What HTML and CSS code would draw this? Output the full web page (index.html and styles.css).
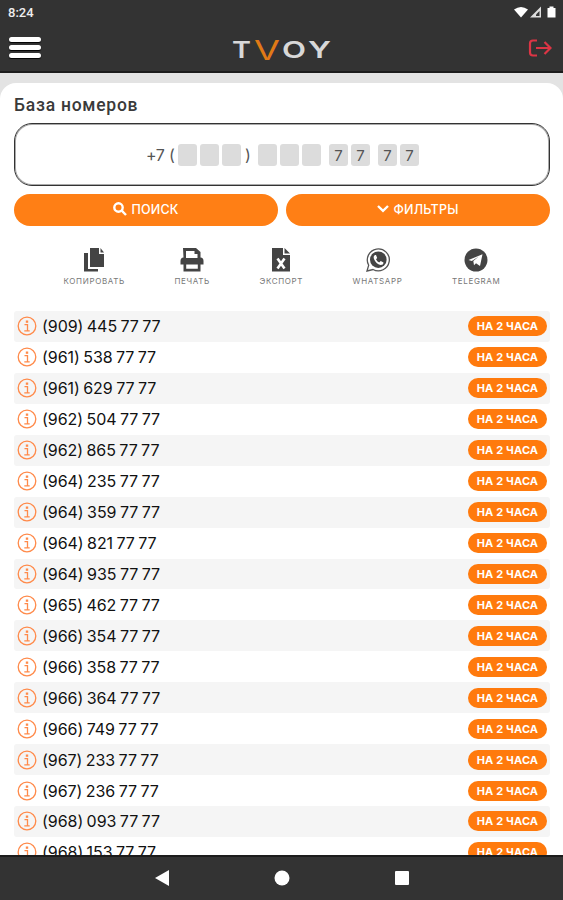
FILE: index.html
```
<!DOCTYPE html>
<html lang="ru">

<head>
    <meta charset="utf-8">
    <meta name="viewport" content="width=device-width, initial-scale=1.0">
    <title>TVOY</title>
    <link rel="stylesheet" href="styles.css">
</head>

<body>
    <header>
        <div class="status">
            <span>8:24</span>
            <svg width="46" height="16" viewBox="0 0 46 16">
                <path fill="#fff" d="M1 6.500Q8 1.500 15 6.500L8 14.500z" />
                <path fill="#ddd" d="M17 14.500 28 3.500v11z" />
                <path fill="#333" d="M23 11.500 26.500 8v5h-3.500z" />
                <path fill="#fff" d="M34.500 5h2V3.500h4V5h2v9.500h-8z" />
            </svg>
        </div>
        <div class="topbar">
            <button class="burger"><i></i><i></i><i></i></button>
            <svg class="logo" width="104" height="44" viewBox="0 0 104 44">
                <text x="3" y="31.500" textLength="19" lengthAdjust="spacingAndGlyphs">T</text>
                <text class="logo-v" x="25" y="33.500" textLength="26" lengthAdjust="spacingAndGlyphs">V</text>
                <text x="53" y="31.500" textLength="24" lengthAdjust="spacingAndGlyphs">O</text>
                <text x="79" y="31.500" textLength="23" lengthAdjust="spacingAndGlyphs">Y</text>
            </svg>
            <svg class="exit" width="24" height="18" viewBox="0 0 24 18">
                <path d="M9 1.500H5Q2 1.500 2 4.500v9Q2 16.500 5 16.500h4M8 9h14M16.500 3l6 6-6 6" />
            </svg>
        </div>
    </header>

    <main>
        <h1>База номеров</h1>

        <section class="mask">
            <span class="code">+7</span>
            <span class="bracket">(</span>
            <div class="group"><b></b><b></b><b></b></div>
            <span class="bracket close">)</span>
            <div class="group"><b></b><b></b><b></b></div>
            <div class="group"><b>7</b><b>7</b></div>
            <div class="group"><b>7</b><b>7</b></div>
        </section>

        <section class="buttons">
            <button class="btn">
                <svg width="14" height="14" viewBox="0 0 14 14">
                    <circle cx="5.500" cy="5.500" r="4.200" />
                    <path d="M8.700 8.700 13 13" />
                </svg>
                ПОИСК
            </button>
            <button class="btn">
                <svg width="12" height="14" viewBox="0 0 12 14">
                    <path d="M1 4l5 4.800L11 4" />
                </svg>
                ФИЛЬТРЫ
            </button>
        </section>

        <section class="tools">
            <a class="tool">
                <svg width="24" height="24" viewBox="0 0 24 24">
                    <path d="M8 0h9v6h5v13H8z" />
                    <path d="M18.500 0 22 4.500h-3.500z" />
                    <path d="M2 5h4v16h10v2.500H2z" />
                </svg>
                КОПИРОВАТЬ
            </a>
            <a class="tool">
                <svg width="24" height="24" viewBox="0 0 24 24">
                    <path fill-rule="evenodd" d="M3 0h13l4.500 4v5.500q3 0 3 3.500v3.500h-3v7H3.500v-7h-3V13q0-3.500 3-3.500zM6 3v7h11.500V6H14.500V3zM6.200 16.500v4.300h11.600v-4.300z" />
                </svg>
                ПЕЧАТЬ
            </a>
            <a class="tool">
                <svg width="24" height="24" viewBox="0 0 24 24">
                    <path d="M3 0h11v7h7v16.500H3z" />
                    <path d="M15.500 0 21 5.500h-5.500z" />
                    <path class="line" d="M8.500 10.500l7 10M15.500 10.500l-7 10" />
                </svg>
                ЭКСПОРТ
            </a>
            <a class="tool">
                <svg width="24" height="24" viewBox="0 0 24 24">
                    <path class="ring" d="M1 23l1.700-5.800A11 11 0 1 1 7 21.500z" />
                    <circle cx="12.300" cy="11.700" r="8.300" />
                    <path class="phone" d="M9 7q-2 1-1 4 2 5 6.500 6 3 0 3-2.500L14.700 13l-1.500 1.500Q11 13.500 10 11.200l1.200-1.300L10 7z" />
                </svg>
                WHATSAPP
            </a>
            <a class="tool">
                <svg width="24" height="24" viewBox="0 0 24 24">
                    <circle cx="12" cy="12" r="11.500" />
                    <path class="plane" d="M4.500 12 18.500 6.200 16 18l-4-2.800-2 2-.7-4.200 5.500-4.500-7 4.500z" />
                </svg>
                TELEGRAM
            </a>
        </section>

        <section class="numbers"></section>
    </main>

    <template class="number-template">
        <article class="row">
            <svg class="info" width="20" height="20" viewBox="0 0 20 20">
                <circle cx="10" cy="10" r="8.800" />
                <path class="dot" d="M8.800 4.500h2.400v2.300H8.800z" />
                <path d="M7.500 8.700h3v6M7.300 14.800h5.400" />
            </svg>
            <span class="phone-number"></span>
            <span class="badge">НА 2 ЧАСА</span>
        </article>
    </template>

    <footer>
        <svg width="16" height="18" viewBox="0 0 16 18"><path d="M1 9 15 1v16z" /></svg>
        <svg width="16" height="16" viewBox="0 0 16 16"><circle cx="8" cy="8" r="7.500" /></svg>
        <svg width="16" height="16" viewBox="0 0 16 16"><rect x="1" y="1" width="14" height="14" rx="1" /></svg>
    </footer>

    <script>
        const numbers = [
            "(909) 445", "(961) 538", "(961) 629", "(962) 504", "(962) 865", "(964) 235",
            "(964) 359", "(964) 821", "(964) 935", "(965) 462", "(966) 354", "(966) 358",
            "(966) 364", "(966) 749", "(967) 233", "(967) 236", "(968) 093", "(968) 153"
        ];
        const dest = document.querySelector(".numbers");
        const temp = document.querySelector(".number-template");

        numbers.forEach(number => {
            const klon = temp.content.cloneNode(true);
            klon.querySelector(".phone-number").textContent = number + " 77 77";
            dest.appendChild(klon);
        });
    </script>
</body>

</html>
```
FILE: styles.css
```
* {
    box-sizing: border-box;
}

body {
    margin: 0;
    height: 100vh;
    display: flex;
    flex-direction: column;
    overflow: hidden;
    background-color: #e3e3e3;
    font-family: Inter, "Noto Sans", sans-serif;
    color: #111;
}

button {
    border: none;
    padding: 0;
    font-family: inherit;
    cursor: pointer;
}

header {
    height: 73px;
    flex: none;
    background-color: #333;
    border-bottom: 2px solid #1c1c1c;
}

.status {
    height: 24px;
    display: flex;
    align-items: center;
    justify-content: space-between;
    padding: 0 4px 0 8px;
    color: #eee;
    font-family: Roboto, sans-serif;
    font-size: 13px;
    font-weight: 500;
}

.status svg {
    margin-top: -2px;
}

.topbar {
    height: 47px;
    display: grid;
    grid-template-columns: 1fr auto 1fr;
    align-items: center;
    padding: 0 11px 0 9px;
}

.burger {
    width: 32px;
    display: flex;
    flex-direction: column;
    gap: 3px;
    background: none;
}

.burger i {
    height: 5px;
    border-radius: 3px;
    background-color: #fff;
    box-shadow: 0 1px 1px #000;
}

.logo {
    fill: #d8d8d8;
    font-size: 23.5px;
    font-weight: 600;
}

.logo-v {
    fill: #e07a16;
    font-size: 27px;
    font-weight: 400;
}

.exit {
    justify-self: end;
    fill: none;
    stroke: #dc3545;
    stroke-width: 2.2;
}

main {
    flex: 1;
    min-height: 0;
    margin-top: 10px;
    padding: 11px 13px 0 14px;
    overflow: hidden;
    border-radius: 16px 16px 0 0;
    background-color: #fff;
}

h1 {
    margin: 0;
    height: 29px;
    font-family: Roboto, sans-serif;
    font-size: 17.5px;
    font-weight: 500;
    line-height: 22px;
    letter-spacing: .75px;
    color: #3a3a3a;
}

.mask {
    height: 63px;
    display: flex;
    align-items: center;
    padding-left: 131px;
    border: 1px solid #333;
    border-radius: 18px;
    box-shadow: inset 0 0 0 1px #aaa;
    color: #555;
    font-size: 16px;
}

.code {
    width: 23px;
    letter-spacing: -.5px;
}

.bracket {
    width: 9px;
}

.close {
    width: 17px;
    padding-left: 4px;
}

.group {
    display: flex;
    gap: 3px;
}

.group + .group {
    margin-left: 8px;
}

.group b {
    width: 19px;
    height: 22px;
    border-radius: 3px;
    background-color: #dcdcdc;
    font-size: 15px;
    font-weight: 400;
    line-height: 23px;
    text-align: center;
}

.buttons {
    display: grid;
    grid-template-columns: 1fr 1fr;
    gap: 8px;
    margin-top: 8px;
}

.btn {
    height: 32px;
    display: flex;
    align-items: center;
    justify-content: center;
    gap: 4px;
    padding-bottom: 2px;
    border-radius: 16px;
    background-color: #ff7f15;
    color: #fff;
    font-size: 12.5px;
    font-weight: 500;
    letter-spacing: .2px;
}

.btn svg {
    fill: none;
    stroke: #fff;
    stroke-width: 2.4;
}

.tools {
    display: flex;
    justify-content: center;
    gap: 49.5px;
    height: 63px;
    margin-top: 22px;
}

.tool {
    display: flex;
    flex-direction: column;
    align-items: center;
    gap: 5px;
    font-size: 8px;
    line-height: 9px;
    letter-spacing: .65px;
    color: #777;
}

.tool svg {
    fill: #444;
}

.tool .line {
    stroke: #fff;
    stroke-width: 2.6;
}

.tool .ring {
    fill: none;
    stroke: #555;
    stroke-width: 1.3;
}

.tool .phone,
.tool .plane {
    fill: #fff;
}

.row {
    height: 30.94px;
    display: flex;
    align-items: center;
    padding: 0 3px;
}

.row:nth-child(odd) {
    background-color: #f5f5f5;
    border-radius: 3px;
}

.info {
    fill: none;
    stroke: #ff8a4a;
    stroke-width: 1.3;
}

.info .dot {
    fill: #ff8a4a;
    stroke: none;
}

.phone-number {
    margin-left: 5px;
    font-size: 16px;
    letter-spacing: -.05px;
    word-spacing: -1px;
}

.badge {
    width: 79px;
    height: 20px;
    margin-left: auto;
    border-radius: 10px;
    background-color: #ff7a0d;
    color: #fff;
    font-size: 11px;
    font-weight: 700;
    line-height: 20px;
    letter-spacing: .15px;
    text-align: center;
}

footer {
    height: 45px;
    flex: none;
    display: flex;
    align-items: center;
    justify-content: center;
    gap: 104px;
    padding-bottom: 1px;
    border-top: 2px solid #1c1c1c;
    background-color: #333;
}

footer svg {
    fill: #fff;
}
```
